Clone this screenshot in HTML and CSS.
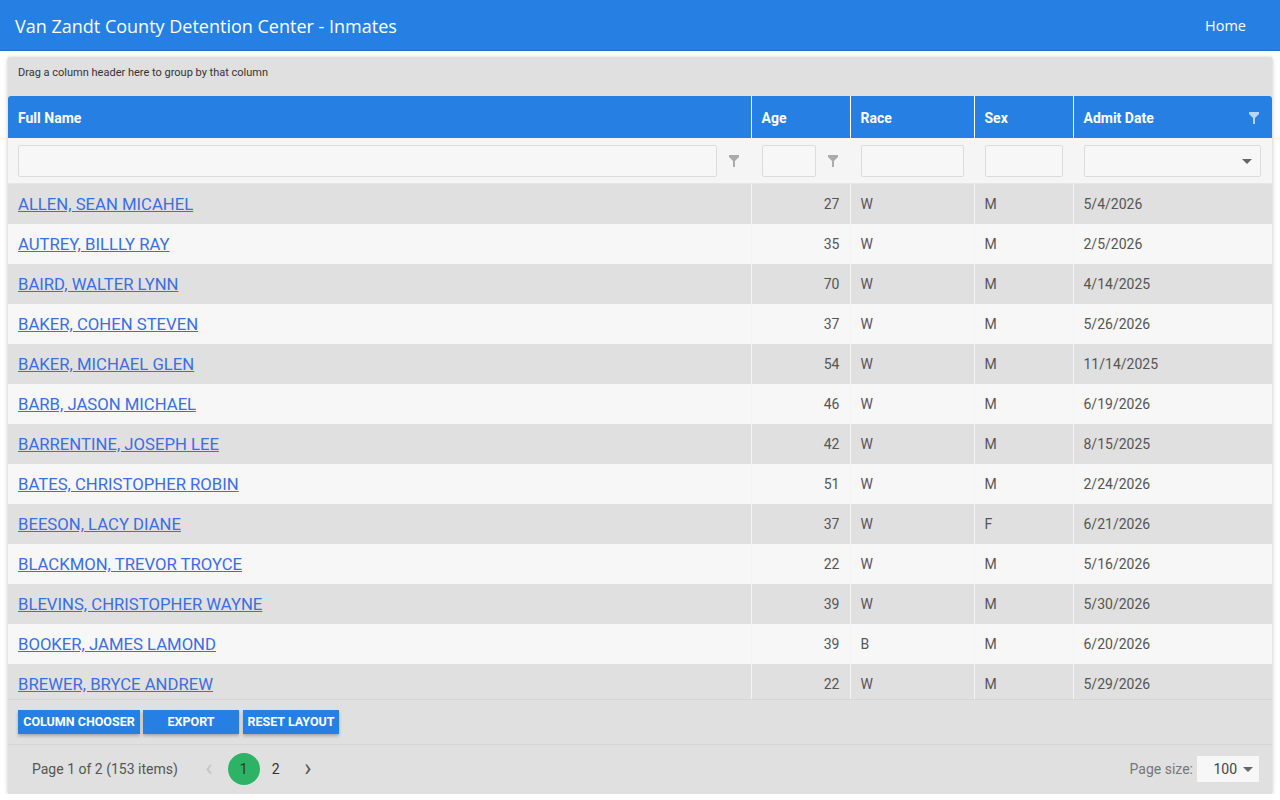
FILE: index.html
```html
<!DOCTYPE html>
<html lang="en">
<head>
    <meta charset="UTF-8">
    <meta name="viewport" content="width=device-width, initial-scale=1.0">
    <title>Van Zandt County Detention Center - Inmates</title>
    <link rel="stylesheet" href="styles.css">
</head>
<body>
    <!-- top bar -->
    <header class="topbar">
        <span class="site-title">Van Zandt County Detention Center - Inmates</span>
        <a class="home-link" href="#">Home</a>
    </header>

    <!-- grid -->
    <div class="grid">
        <div class="group-panel">Drag a column header here to group by that column</div>

        <table class="grid-table head-table">
            <colgroup>
                <col class="c-name"><col class="c-age"><col class="c-race"><col class="c-sex"><col class="c-date">
            </colgroup>
            <tr class="head-row">
                <th>Full Name</th>
                <th>Age</th>
                <th>Race</th>
                <th>Sex</th>
                <th class="date-head">Admit Date
                    <svg class="head-filter" width="10" height="12" viewBox="0 0 10 12"><path d="M0 0h10v2L6 6v6H4V6L0 2z" fill="#b9d4f5"/></svg>
                </th>
            </tr>
            <tr class="filter-row">
                <td>
                    <div class="filter-cell">
                        <input class="filter-input wide" type="text">
                        <svg class="filter-icon" width="10" height="12" viewBox="0 0 10 12"><path d="M0 0h10v2L6 6v6H4V6L0 2z" fill="#ababab"/></svg>
                    </div>
                </td>
                <td>
                    <div class="filter-cell">
                        <input class="filter-input age" type="text">
                        <svg class="filter-icon" width="10" height="12" viewBox="0 0 10 12"><path d="M0 0h10v2L6 6v6H4V6L0 2z" fill="#ababab"/></svg>
                    </div>
                </td>
                <td><div class="filter-cell"><input class="filter-input race" type="text"></div></td>
                <td><div class="filter-cell"><input class="filter-input sex" type="text"></div></td>
                <td>
                    <div class="filter-cell">
                        <div class="filter-input date"><span class="caret"></span></div>
                    </div>
                </td>
            </tr>
        </table>

        <div class="rows-view">
            <table class="grid-table">
                <colgroup>
                    <col class="c-name"><col class="c-age"><col class="c-race"><col class="c-sex"><col class="c-date">
                </colgroup>
                <tbody id="rows"></tbody>
            </table>
        </div>

        <div class="toolbar">
            <button class="tool-btn chooser">COLUMN CHOOSER</button>
            <button class="tool-btn">EXPORT</button>
            <button class="tool-btn reset">RESET LAYOUT</button>
        </div>

        <div class="pager">
            <span class="page-info">Page 1 of 2 (153 items)</span>
            <span class="page-nav disabled">&#8249;</span>
            <span class="page-num current">1</span>
            <span class="page-num">2</span>
            <span class="page-nav">&#8250;</span>
            <span class="page-size-label">Page size:</span>
            <div class="page-size">100 <span class="caret"></span></div>
        </div>
    </div>

    <script>
        // inmate rows (first page, visible part)
        const inmates = [
            ["ALLEN, SEAN MICAHEL", 27, "W", "M", "5/4/2026"],
            ["AUTREY, BILLLY RAY", 35, "W", "M", "2/5/2026"],
            ["BAIRD, WALTER LYNN", 70, "W", "M", "4/14/2025"],
            ["BAKER, COHEN STEVEN", 37, "W", "M", "5/26/2026"],
            ["BAKER, MICHAEL GLEN", 54, "W", "M", "11/14/2025"],
            ["BARB, JASON MICHAEL", 46, "W", "M", "6/19/2026"],
            ["BARRENTINE, JOSEPH LEE", 42, "W", "M", "8/15/2025"],
            ["BATES, CHRISTOPHER ROBIN", 51, "W", "M", "2/24/2026"],
            ["BEESON, LACY DIANE", 37, "W", "F", "6/21/2026"],
            ["BLACKMON, TREVOR TROYCE", 22, "W", "M", "5/16/2026"],
            ["BLEVINS, CHRISTOPHER WAYNE", 39, "W", "M", "5/30/2026"],
            ["BOOKER, JAMES LAMOND", 39, "B", "M", "6/20/2026"],
            ["BREWER, BRYCE ANDREW", 22, "W", "M", "5/29/2026"]
        ];

        const tbody = document.getElementById("rows");
        inmates.forEach(function (r, i) {
            const tr = document.createElement("tr");
            tr.className = i % 2 === 0 ? "data-row alt" : "data-row";
            tr.innerHTML =
                '<td><a class="name-link" href="#">' + r[0] + '</a></td>' +
                '<td class="num">' + r[1] + '</td>' +
                '<td>' + r[2] + '</td>' +
                '<td>' + r[3] + '</td>' +
                '<td>' + r[4] + '</td>';
            tbody.appendChild(tr);
        });
    </script>
</body>
</html>
```

FILE: styles.css
```css
/* base */
body {
    margin: 0;
    padding: 0;
    background: #fff;
    font-family: Roboto, 'Liberation Sans', sans-serif;
    color: #555;
}

/* top bar */
.topbar {
    height: 51px;
    background: #2680e3;
    border-bottom: 1px solid #1f6cc2;
    display: flex;
    align-items: center;
    justify-content: space-between;
    padding: 0 34px 0 15px;
    box-sizing: border-box;
}

.site-title {
    color: #fff;
    font-family: 'Open Sans', 'Noto Sans', sans-serif;
    font-size: 18px;
    margin-top: 2px;
}

.home-link {
    color: #fff;
    text-decoration: none;
    font-family: 'Open Sans', 'Noto Sans', sans-serif;
    font-size: 14.5px;
    margin-top: 1px;
}

/* grid wrapper */
.grid {
    margin: 6px 8px 0 8px;
    background: #e0e0e0;
    box-shadow: 0 1px 4px rgba(0, 0, 0, 0.25);
    border-radius: 0 0 3px 3px;
}

.group-panel {
    height: 39px;
    font-size: 11px;
    color: #333;
    padding: 9px 0 0 10px;
    box-sizing: border-box;
}

/* tables */
.grid-table {
    width: 100%;
    border-collapse: collapse;
    table-layout: fixed;
}

.c-name { width: 743px; }
.c-age { width: 99px; }
.c-race { width: 124px; }
.c-sex { width: 99px; }
.c-date { width: 199px; }

.head-row th {
    height: 42px;
    background: #2680e3;
    color: #fff;
    font-size: 14px;
    font-weight: bold;
    text-align: left;
    padding: 1px 10px 0 10px;
    border-left: 1px solid #fff;
    box-sizing: border-box;
}

.head-row th:first-child {
    border-left: none;
    border-radius: 3px 0 0 0;
}

.head-row th:last-child {
    border-radius: 0 3px 0 0;
}

.date-head {
    position: relative;
}

.head-filter {
    position: absolute;
    right: 13px;
    top: 16px;
}

/* filter row */
.filter-row td {
    height: 45px;
    background: #f5f5f5;
    padding: 1px 10px 0 10px;
    border-bottom: 1px solid #e6e6e6;
    box-sizing: border-box;
}

.filter-row td:nth-child(2),
.filter-row td:nth-child(3),
.filter-row td:nth-child(4),
.filter-row td:nth-child(5) {
    padding-left: 11px;
}

.filter-cell {
    display: flex;
    align-items: center;
    gap: 12px;
}

.filter-input {
    flex-shrink: 0;
    height: 32px;
    border: 1px solid #dcdcdc;
    background: #f7f7f7;
    box-sizing: border-box;
    padding: 0;
    margin: 0;
    border-radius: 2px;
}

.filter-input.wide { width: 699px; }
.filter-input.age { width: 54px; }
.filter-input.race { width: 103px; }
.filter-input.sex { width: 78px; }

.filter-input.date {
    width: 177px;
    position: relative;
}

.filter-input.date .caret {
    position: absolute;
    right: 8px;
    top: 13px;
}

.filter-icon {
    flex-shrink: 0;
}

.caret {
    display: inline-block;
    width: 0;
    height: 0;
    border-left: 5px solid transparent;
    border-right: 5px solid transparent;
    border-top: 5px solid #666;
}

/* body rows */
.rows-view {
    height: 515px;
    overflow: hidden;
}

.data-row td {
    height: 40px;
    padding: 1px 10px 0 10px;
    font-size: 14px;
    color: #555;
    background: #f7f7f7;
    border-left: 1px solid #f4f4f4;
    box-sizing: border-box;
    white-space: nowrap;
}

.data-row.alt td {
    background: #e0e0e0;
}

.data-row td:first-child {
    border-left: none;
}

.data-row td.num {
    text-align: right;
}

.name-link {
    color: #3a6fe0;
    font-size: 16.7px;
    text-decoration: underline;
}

/* toolbar */
.toolbar {
    height: 46px;
    display: flex;
    align-items: center;
    gap: 3px;
    padding: 0 10px;
    border-top: 1px solid #d6d6d6;
    border-bottom: 1px solid #d6d6d6;
    box-sizing: border-box;
}

.tool-btn {
    width: 96px;
    height: 24px;
    background: #2680e3;
    color: #fff;
    border: none;
    font-family: Roboto, sans-serif;
    font-size: 12.5px;
    font-weight: bold;
    padding: 0;
    white-space: nowrap;
    box-shadow: 0 2px 3px rgba(0, 0, 0, 0.25);
    cursor: pointer;
}

.tool-btn.chooser {
    width: 122px;
}

.tool-btn.reset {
    margin-left: 1px;
}

/* pager */
.pager {
    height: 49px;
    display: flex;
    align-items: center;
    padding: 0 13px 0 24px;
    font-size: 14px;
    color: #555;
}

.page-info {
    margin-right: 15px;
}

.page-nav {
    font-size: 24px;
    color: #555;
    width: 32px;
    text-align: center;
    line-height: 1;
    margin-top: -3px;
}

.page-nav.disabled {
    color: #c4c4c4;
}

.page-num {
    width: 32px;
    height: 32px;
    border-radius: 50%;
    display: flex;
    align-items: center;
    justify-content: center;
    color: #333;
}

.page-num.current {
    background: #2db365;
    margin-left: 3px;
}

.page-size-label {
    margin-left: auto;
    color: #777;
    margin-right: 4px;
}

.page-size {
    width: 62px;
    height: 26px;
    background: #f7f7f7;
    display: flex;
    align-items: center;
    justify-content: flex-end;
    gap: 6px;
    padding-right: 6px;
    box-sizing: border-box;
    color: #444;
}
```
